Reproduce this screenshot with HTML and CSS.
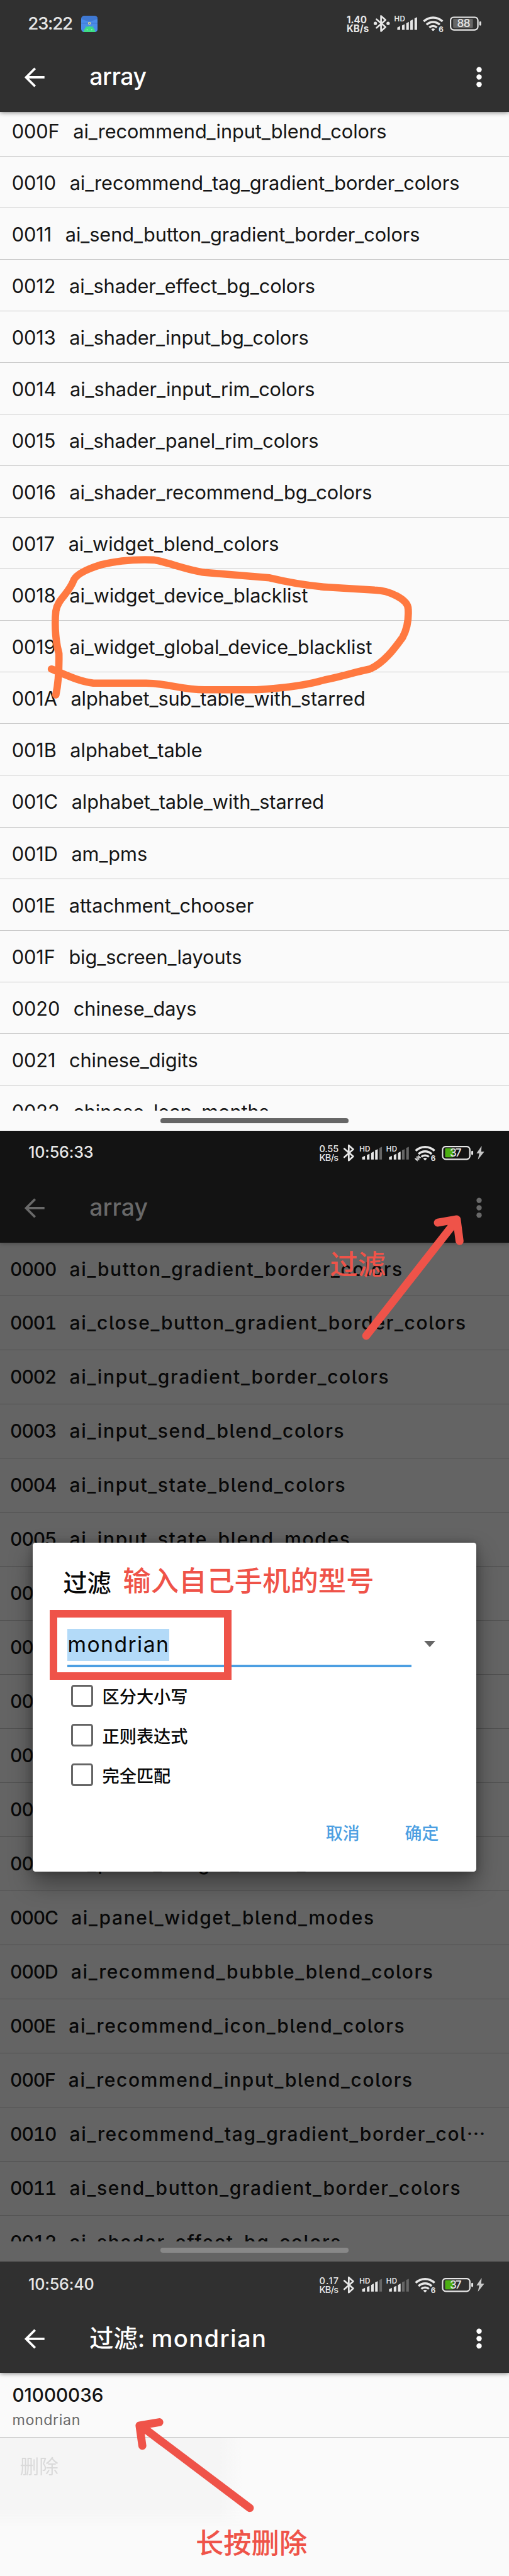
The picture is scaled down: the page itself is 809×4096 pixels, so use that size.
FILE: index.html
```html
<!DOCTYPE html>
<html lang="zh-CN">
<head>
<meta charset="utf-8">
<title>array</title>
<link rel="stylesheet" href="styles.css">
</head>
<body>
<svg class="defs" width="0" height="0">
  <symbol id="back" viewBox="0 0 48 48"><path d="M25 5 6 24l19 19M7 24h38" fill="none" stroke="currentColor" stroke-width="5"/></symbol>
  <symbol id="more" viewBox="0 0 12 44"><circle cx="6" cy="6.300" r="5.600"/><circle cx="6" cy="22" r="5.600"/><circle cx="6" cy="37.700" r="5.600"/></symbol>
  <symbol id="bt" viewBox="0 0 24 38"><path d="M2 10 21 26.500 11.500 35V3L21 11.500 2 28" fill="none" stroke="currentColor" stroke-width="3.600" stroke-linejoin="round" stroke-linecap="round"/></symbol>
  <symbol id="wifi" viewBox="0 0 44 32"><g fill="none" stroke="currentColor" stroke-width="4.600"><path d="M2 11.500a28.500 28.500 0 0 1 40 0"/><path d="M8 18.500a20 20 0 0 1 28 0"/><path d="M14 24.500a11.500 11.500 0 0 1 16 0"/></g><path d="M18 28a5.500 5.500 0 0 1 8 0l-3 3.500q-1 .8-2 0z"/></symbol>
  <symbol id="battery" viewBox="0 0 68 32"><rect x="1.500" y="1.500" width="58" height="27" rx="7" fill="none" stroke="currentColor" stroke-width="3"/><rect x="62.500" y="10.500" width="4" height="9" rx="2"/></symbol>
  <symbol id="bolt" viewBox="0 0 18 30"><path d="M12 0 1 16h6L4 29.500 17.500 12.500H11z"/></symbol>
</svg>

<main class="page">
  <section class="screen screen-light">
    <header class="appbar">
      <div class="status">
        <span class="clock clock-lg">23:22</span>
        <svg class="app-icon" viewBox="0 0 35 35"><rect width="35" height="35" rx="7" fill="#4a8bea"/><path d="M0 7a7 7 0 0 1 7-7h21a7 7 0 0 1 7 7L17.500 13z" fill="#3f78d2"/><path d="M0 16h35" stroke="#3b70c4"/><circle cx="17.500" cy="16" r="3" fill="#d9d39a"/><circle cx="17.500" cy="16" r="1.200" fill="#57789a"/><path d="M5 35a12.500 12.500 0 0 1 25 0z" fill="#3ddc84"/><path d="m9 21 3 5m14-5-3 5" stroke="#3ddc84" stroke-width="1.500"/><circle cx="12.500" cy="30" r="1" fill="#fff"/><circle cx="22.500" cy="30" r="1" fill="#fff"/></svg>
        <svg class="cluster" viewBox="640 0 440 100">
          <g class="speed bold"><text x="736" y="50" textLength="43" lengthAdjust="spacingAndGlyphs">1.40</text><text x="736" y="67.500" textLength="47" lengthAdjust="spacingAndGlyphs">KB/s</text></g>
          <use href="#bt" x="797.500" y="31" width="24" height="38"/>
          <circle cx="797" cy="49.700" r="3.500"/><circle cx="824" cy="49.700" r="3.500"/>
          <text class="hd" x="837" y="46" textLength="23">HD</text>
          <path d="M843.500 63.500v-5l6-3v8zM853.500 63.500V54l5.500-2.500v12zM862.500 63.500V49.500l5.500-3v17zM871 63.500V44l5.500-2.500v22zM880 63.500V39l5.500-2.500v27z"/>
          <use href="#wifi" x="897.500" y="34" width="44" height="32"/>
          <circle cx="936" cy="62" r="8" fill="#303030"/><text class="six" x="931.500" y="68">6</text>
          <rect x="962" y="40" width="42" height="19.500" rx="2" fill="#666"/>
          <use href="#battery" x="955" y="35" width="68" height="32"/>
          <text class="pct" x="970.500" y="58" textLength="28">88</text>
        </svg>
      </div>
      <div class="toolbar"><svg class="back"><use href="#back"/></svg><h1 class="t-light">array</h1><svg class="more"><use href="#more"/></svg></div>
    </header>
    <div class="viewport">
      <ul class="rows rows-a">
        <li>000F&nbsp; ai_recommend_input_blend_colors</li>
        <li>0010&nbsp; ai_recommend_tag_gradient_border_colors</li>
        <li>0011&nbsp; ai_send_button_gradient_border_colors</li>
        <li>0012&nbsp; ai_shader_effect_bg_colors</li>
        <li>0013&nbsp; ai_shader_input_bg_colors</li>
        <li>0014&nbsp; ai_shader_input_rim_colors</li>
        <li>0015&nbsp; ai_shader_panel_rim_colors</li>
        <li>0016&nbsp; ai_shader_recommend_bg_colors</li>
        <li>0017&nbsp; ai_widget_blend_colors</li>
        <li>0018&nbsp; ai_widget_device_blacklist</li>
        <li>0019&nbsp; ai_widget_global_device_blacklist</li>
        <li>001A&nbsp; alphabet_sub_table_with_starred</li>
        <li>001B&nbsp; alphabet_table</li>
        <li>001C&nbsp; alphabet_table_with_starred</li>
        <li>001D&nbsp; am_pms</li>
        <li>001E&nbsp; attachment_chooser</li>
        <li>001F&nbsp; big_screen_layouts</li>
        <li>0020&nbsp; chinese_days</li>
        <li>0021&nbsp; chinese_digits</li>
        <li>0022&nbsp; chinese_leap_months</li>
      </ul>
    </div>
    <div class="home"></div>
    <svg class="ink" viewBox="0 0 1080 2400"><path d="M109 1420C135 1430 165 1446 198 1450L310 1450C360 1451 385 1464 434 1464L544 1464C590 1461 640 1457 689 1443C730 1435 750 1427 785 1420C815 1407 838 1375 854 1353Q868 1328 866 1293C866 1272 825 1253 795 1252.500L696 1246.500C640 1242 595 1232 572 1226.500L434 1215C400 1211 355 1193 327 1188.500Q265 1186 213 1199C175 1211 162 1221 157 1230C145 1262 123 1270 118.500 1297C115 1330 119 1366 125 1387Q126 1440 118.500 1475" fill="none" stroke="#ff7940" stroke-width="15.500" stroke-linecap="round" stroke-linejoin="round"/></svg>
  </section>

  <section class="screen screen-dim">
    <header class="appbar">
      <div class="status">
        <span class="clock">10:56:33</span>
        <svg class="cluster" viewBox="640 0 440 100">
          <g class="speed"><text x="678" y="46" textLength="41">0.55</text><text x="678" y="64" textLength="41">KB/s</text></g>
          <use href="#bt" x="729" y="28" width="24" height="38"/>
          <text class="hd" x="763" y="43.500" textLength="23">HD</text><text class="hd" x="820" y="43.500" textLength="23">HD</text>
          <path d="M769 61v-5l6-3v8zM779 61V51.500l5.500-2.500v12zM788 61V47l5.500-3v17zM796.500 61V41.500L802 39v22zM826 61v-5l6-3v8zM836 61V51.500l5.500-2.500v12zM845 61V47l5.500-3v17z"/>
          <path class="faint" d="M805.500 61V36.500L811 34v27zM853.500 61V41.500L859 39v22zM862.500 61V36.500L868 34v27z"/>
          <use href="#wifi" x="880.500" y="31" width="44" height="32"/>
          <path class="cut" d="M880 53h13v11h-13zM914 53h11v11h-11z"/>
          <path d="M885.500 54v8.500l-4.500-4m8 4V54l4 4" fill="none" stroke="#e6e6e6" stroke-width="2.200"/>
          <text class="six" x="914.500" y="64">6</text>
          <rect x="945" y="37" width="17.500" height="19.500" rx="2" fill="#4caf12"/>
          <use href="#battery" x="938" y="32" width="68" height="32"/>
          <text class="pct" x="955" y="54.500" textLength="25">37</text>
          <use href="#bolt" x="1010.500" y="32" width="18" height="30" opacity=".85"/>
        </svg>
      </div>
      <div class="toolbar"><svg class="back"><use href="#back"/></svg><h1>array</h1><svg class="more"><use href="#more"/></svg></div>
    </header>
    <div class="viewport">
      <ul class="rows rows-b">
        <li><span class="code">0000</span>ai_button_gradient_border_colors</li>
        <li><span class="code">0001</span>ai_close_button_gradient_border_colors</li>
        <li><span class="code">0002</span>ai_input_gradient_border_colors</li>
        <li><span class="code">0003</span>ai_input_send_blend_colors</li>
        <li><span class="code">0004</span>ai_input_state_blend_colors</li>
        <li><span class="code">0005</span>ai_input_state_blend_modes</li>
        <li><span class="code">0006</span></li>
        <li><span class="code">0007</span></li>
        <li><span class="code">0008</span></li>
        <li><span class="code">0009</span></li>
        <li><span class="code">000A</span></li>
        <li><span class="code">000B</span>ai_panel_widget_blend_colors</li>
        <li><span class="code">000C</span>ai_panel_widget_blend_modes</li>
        <li><span class="code">000D</span>ai_recommend_bubble_blend_colors</li>
        <li><span class="code">000E</span>ai_recommend_icon_blend_colors</li>
        <li><span class="code">000F</span>ai_recommend_input_blend_colors</li>
        <li><span class="code">0010</span>ai_recommend_tag_gradient_border_col<span class="dots">⋯</span></li>
        <li><span class="code">0011</span>ai_send_button_gradient_border_colors</li>
        <li><span class="code">0012</span>ai_shader_effect_bg_colors</li>
      </ul>
    </div>
    <div class="home"></div>
    <div class="dialog">
      <h2>过滤</h2>
      <div class="field"><div class="input"><span class="sel">mondrian</span></div><span class="caret"></span></div>
      <label class="check"><i></i>区分大小写</label>
      <label class="check"><i></i>正则表达式</label>
      <label class="check"><i></i>完全匹配</label>
      <div class="actions"><span>取消</span><span>确定</span></div>
    </div>
    <div class="frame"></div>
    <p class="note note-filter">过滤</p>
    <p class="note note-model">输入自己手机的型号</p>
    <svg class="ink" viewBox="0 0 1080 2400"><path d="M777 435 967 192M929 195l40-7 6 46" class="arrow"/></svg>
  </section>

  <section class="screen screen-last">
    <header class="appbar">
      <div class="status low">
        <span class="clock">10:56:40</span>
        <svg class="cluster" viewBox="640 0 440 100">
          <g class="speed"><text x="678" y="46" textLength="41">0.17</text><text x="678" y="64" textLength="41">KB/s</text></g>
          <use href="#bt" x="729" y="28" width="24" height="38"/>
          <text class="hd" x="763" y="43.500" textLength="23">HD</text><text class="hd" x="820" y="43.500" textLength="23">HD</text>
          <path d="M769 61v-5l6-3v8zM779 61V51.500l5.500-2.500v12zM788 61V47l5.500-3v17zM796.500 61V41.500L802 39v22zM826 61v-5l6-3v8zM836 61V51.500l5.500-2.500v12zM845 61V47l5.500-3v17z"/>
          <path class="faint" d="M805.500 61V36.500L811 34v27zM853.500 61V41.500L859 39v22zM862.500 61V36.500L868 34v27z"/>
          <use href="#wifi" x="880.500" y="31" width="44" height="32"/>
          <path fill="#303030" d="M914 53h11v11h-11z"/>
          <text class="six" x="914.500" y="64">6</text>
          <rect x="945" y="37" width="17.500" height="19.500" rx="2" fill="#4caf12"/>
          <use href="#battery" x="938" y="32" width="68" height="32"/>
          <text class="pct" x="955" y="54.500" textLength="25">37</text>
          <use href="#bolt" x="1010.500" y="32" width="18" height="30" opacity=".85"/>
        </svg>
      </div>
      <div class="toolbar"><svg class="back"><use href="#back"/></svg><h1 class="t-cjk">过滤: <span class="wide">mondrian</span></h1><svg class="more"><use href="#more"/></svg></div>
    </header>
    <div class="result"><strong>01000036</strong><span>mondrian</span></div>
    <div class="popup">删除</div>
    <p class="note note-delete">长按删除</p>
    <svg class="ink ink-last" viewBox="0 0 1080 667"><path d="M530 523 298 348M338 341l-42 7 6 43" class="arrow"/></svg>
  </section>
</main>
</body>
</html>
```
FILE: styles.css
```css
* { box-sizing: border-box; }
html { background: #fafafa; overflow: hidden; }
body { margin: 0; font-family: Inter, "Noto Sans CJK SC", sans-serif; }
h1, h2, p, ul { margin: 0; padding: 0; font-weight: 500; }
.defs { position: absolute; }
.page { width: 1080px; height: 5468px; overflow: hidden; zoom: 0.74915; }

.screen { position: relative; height: 2400px; display: flex; flex-direction: column; overflow: hidden; background: #fafafa; color: #151515; }
.screen-last { height: 668px; }

/* App bar */
.appbar { position: relative; z-index: 1; flex: none; height: 237px; background: #303030; color: #fff; box-shadow: 0 1px 10px rgba(0, 0, 0, .6); }
.status { display: flex; align-items: flex-start; height: 100px; padding-left: 60px; color: #e6e6e6; }
.status svg { fill: currentColor; }
.clock { font-size: 33.500px; line-height: 40px; margin-top: 27px; font-weight: 500; letter-spacing: -.2px; }
.clock-lg { font-size: 37px; line-height: 44px; margin-top: 28px; letter-spacing: -1.700px; margin-left: -1px; }
.low { padding-top: 3px; }
.app-icon { width: 35px; height: 35px; margin: 33px 0 0 19px; }
.cluster { width: 440px; height: 100px; margin-left: auto; flex: none; }
.speed { font-size: 19.500px; font-weight: 500; }
.speed.bold { font-size: 21.500px; font-weight: 700; }
.hd { font-size: 15.500px; font-weight: 600; }
.six { font-size: 15.500px; font-weight: 700; }
.pct { font-size: 23px; font-weight: 500; }
.faint { fill: #666; }
.toolbar { display: flex; align-items: center; height: 128px; padding: 0 57px 0 50px; }
.toolbar svg { fill: currentColor; flex: none; }
.back { width: 48px; height: 48px; }
.more { width: 12px; height: 44px; margin-left: auto; }
.toolbar h1 { margin-left: 92px; font-size: 50px; line-height: 60px; }
.toolbar .t-light { letter-spacing: -.7px; }
.toolbar .t-cjk { font-size: 51px; }
.wide { letter-spacing: 1.800px; }

/* Lists */
.viewport { overflow: hidden; flex: none; height: 2120px; }
.rows { list-style: none; }
.rows li { padding-left: 25px; white-space: pre; }
.rows-a { margin-top: -14px; }
.rows-a li { height: 109.500px; line-height: 113px; font-size: 41px; border-bottom: 1.500px solid #c8c8c8; font-weight: 400; word-spacing: 3px; letter-spacing: -.1px; }
.rows-b li { height: 114.750px; line-height: 113px; font-size: 40px; border-bottom: 1.500px solid #505050; font-weight: 500; padding-left: 21.500px; letter-spacing: 2.200px; font-feature-settings: "tnum", "cv05"; }
.code { margin-right: 28.500px; letter-spacing: -1.500px; }
.home { width: 399px; height: 10.500px; border-radius: 5px; background: #666; margin: 17px auto 0; }

/* Dimmed screen */
.screen-dim { background: #646464; color: #080808; }
.screen-dim .appbar { background: #131313; box-shadow: 0 1px 10px rgba(0, 0, 0, .35); }
.screen-dim .toolbar { color: #696969; }
.screen-dim .home { background: #888; margin-top: 14px; }
.cut { fill: #131313; }

/* Dialog */
.dialog { position: absolute; z-index: 2; left: 70px; top: 875px; width: 940px; height: 697px; padding: 48px 0 0 64px; background: #fff; border-radius: 6px; box-shadow: 0 24px 50px rgba(0, 0, 0, .4), 0 0 16px rgba(0, 0, 0, .25); color: #080808; }
.dialog h2 { font-size: 51px; line-height: 76px; }
.field { display: flex; margin-top: 58px; margin-left: 9.500px; }
.input { width: 729px; height: 82px; border-bottom: 5.500px solid #4d9fe2; }
.sel { display: inline-block; height: 68px; line-height: 66px; font-size: 45px; letter-spacing: 1.900px; background: #b3daf8; }
.caret { width: 0; height: 0; margin: 26px 0 0 27.500px; border: 12.500px solid transparent; border-top: 14.500px solid #666; border-bottom: 0; }
.check { display: flex; align-items: center; height: 84px; margin-left: 17px; font-size: 36.300px; font-weight: 500; }
.field + .check { margin-top: 18px; }
.check i { width: 47px; height: 47px; margin-right: 19px; border: 5px solid #666; border-radius: 6px; }
.actions { display: flex; justify-content: flex-end; gap: 96px; padding: 58px 79px 0 0; font-size: 36px; line-height: 50px; font-weight: 500; color: #4d9fe2; }

/* Annotations */
.frame { position: absolute; z-index: 3; left: 106px; top: 1017px; width: 385px; height: 149px; border: 16.500px solid #ef5349; }
.ink { position: absolute; z-index: 4; left: 0; top: 0; width: 1080px; height: 2400px; }
.ink-last { height: 667px; }
.arrow { fill: none; stroke: #ef5349; stroke-width: 17px; stroke-linecap: round; stroke-linejoin: round; }
.note { position: absolute; z-index: 3; color: #ef5349; font-size: 59.200px; line-height: 80px; white-space: nowrap; }
.note-filter { left: 700px; top: 246px; }
.note-model { left: 261px; top: 917px; }
.note-delete { left: 415px; top: 560px; }

/* Filter result */
.result { height: 136.500px; padding: 23px 26px 0; border-bottom: 1.500px solid #c8c8c8; display: flex; flex-direction: column; }
.result strong { font-size: 39.500px; line-height: 46px; font-weight: 500; }
.result span { font-size: 31px; line-height: 38px; margin-top: 12px; color: #6b6b6b; font-weight: 400; letter-spacing: .8px; }
.popup { width: 515px; height: 190px; padding: 32px 42px; font-size: 41px; line-height: 60px; color: #dadada; background: linear-gradient(90deg, #f5f5f5 90%, #fafafa); -webkit-mask-image: linear-gradient(#000 80%, transparent); }
```
